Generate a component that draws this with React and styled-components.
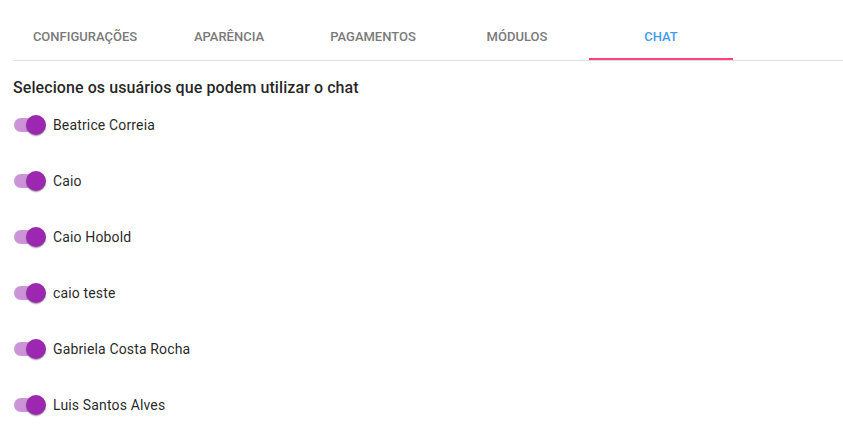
import styled, { createGlobalStyle } from 'styled-components';

const GlobalStyle = createGlobalStyle`
  body {
    margin: 0;
    background: #fff;
    font-family: Roboto, "Liberation Sans", sans-serif;
  }
`;

const tabs = ['Configurações', 'Aparência', 'Pagamentos', 'Módulos', 'Chat'];
const users = [
  'Beatrice Correia',
  'Caio',
  'Caio Hobold',
  'caio teste',
  'Gabriela Costa Rocha',
  'Luis Santos Alves',
];

export default function App() {
  return (
    <Page>
      <GlobalStyle />
      <TabBar>
        {tabs.map((t) => (
          <Tab key={t} $active={t === 'Chat'}>
            {t}
          </Tab>
        ))}
      </TabBar>
      <Title>Selecione os usuários que podem utilizar o chat</Title>
      <List>
        {users.map((u) => (
          <Row key={u}>
            <Switch>
              <Track />
              <Thumb />
            </Switch>
            <Label>{u}</Label>
          </Row>
        ))}
      </List>
    </Page>
  );
}

const Page = styled.div`
  padding: 12px 0 0 13px;
`;

const TabBar = styled.div`
  display: flex;
  border-bottom: 1px solid #e0e0e0;
`;

const Tab = styled.div`
  width: 144px;
  height: 48px;
  display: flex;
  align-items: center;
  justify-content: center;
  box-sizing: border-box;
  text-transform: uppercase;
  font-size: 13px;
  font-weight: 500;
  letter-spacing: 0;
  color: ${(p) => (p.$active ? '#3f9cf0' : '#7a7a7a')};
  border-bottom: 2px solid ${(p) => (p.$active ? '#ff4081' : 'transparent')};
  padding-top: 2px;
`;

const Title = styled.h3`
  margin: 15px 0 0;
  font-size: 16px;
  line-height: 24px;
  font-weight: 500;
  letter-spacing: 0.08px;
  color: rgba(0, 0, 0, 0.87);
`;

const List = styled.div`
  display: flex;
  flex-direction: column;
  gap: 18px;
  margin-top: 6px;
`;

const Row = styled.div`
  display: flex;
  align-items: center;
  height: 38px;
`;

const Switch = styled.div`
  position: relative;
  width: 40px;
  height: 38px;
`;

const Track = styled.div`
  position: absolute;
  left: 1px;
  top: 12px;
  width: 30px;
  height: 14px;
  border-radius: 7px;
  background: #9c27b0;
  opacity: 0.5;
`;

const Thumb = styled.div`
  position: absolute;
  left: 13px;
  top: 9px;
  width: 20px;
  height: 20px;
  border-radius: 50%;
  background: #9c27b0;
  box-shadow: 0 2px 1px -1px rgba(0, 0, 0, 0.2), 0 1px 1px 0 rgba(0, 0, 0, 0.14),
    0 1px 3px 0 rgba(0, 0, 0, 0.12);
`;

const Label = styled.span`
  font-size: 14px;
  letter-spacing: 0.15px;
  color: rgba(0, 0, 0, 0.87);
`;
